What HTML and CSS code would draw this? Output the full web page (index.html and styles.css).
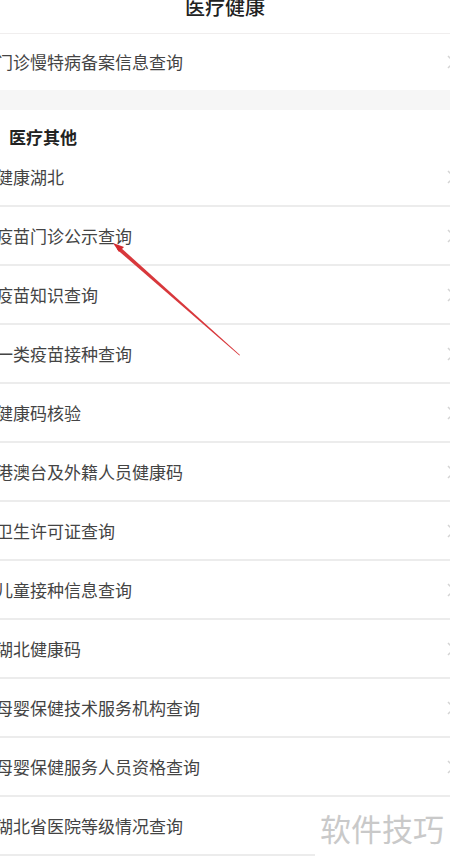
FILE: index.html
```html
<!DOCTYPE html>
<html lang="zh-CN">

<head>
    <meta charset="UTF-8">
    <meta name="viewport" content="width=device-width, initial-scale=1.0">
    <title>医疗健康</title>
    <link rel="stylesheet" href="styles.css">
</head>

<body>
    <header class="top-bar">
        <h1>医疗健康</h1>
    </header>

    <div class="page">
        <ul class="list">
            <li class="item first">
                <span>门诊慢特病备案信息查询</span>
                <svg class="chevron" viewBox="0 0 8 14"><path d="M1 1l6 6-6 6" /></svg>
            </li>
        </ul>

        <div class="gap"></div>

        <h2 class="section-title">医疗其他</h2>
        <ul class="list">
            <li class="item"><span>健康湖北</span><svg class="chevron" viewBox="0 0 8 14"><path d="M1 1l6 6-6 6" /></svg></li>
            <li class="item"><span>疫苗门诊公示查询</span><svg class="chevron" viewBox="0 0 8 14"><path d="M1 1l6 6-6 6" /></svg></li>
            <li class="item"><span>疫苗知识查询</span><svg class="chevron" viewBox="0 0 8 14"><path d="M1 1l6 6-6 6" /></svg></li>
            <li class="item"><span>一类疫苗接种查询</span><svg class="chevron" viewBox="0 0 8 14"><path d="M1 1l6 6-6 6" /></svg></li>
            <li class="item"><span>健康码核验</span><svg class="chevron" viewBox="0 0 8 14"><path d="M1 1l6 6-6 6" /></svg></li>
            <li class="item"><span>港澳台及外籍人员健康码</span><svg class="chevron" viewBox="0 0 8 14"><path d="M1 1l6 6-6 6" /></svg></li>
            <li class="item"><span>卫生许可证查询</span><svg class="chevron" viewBox="0 0 8 14"><path d="M1 1l6 6-6 6" /></svg></li>
            <li class="item"><span>儿童接种信息查询</span><svg class="chevron" viewBox="0 0 8 14"><path d="M1 1l6 6-6 6" /></svg></li>
            <li class="item"><span>湖北健康码</span><svg class="chevron" viewBox="0 0 8 14"><path d="M1 1l6 6-6 6" /></svg></li>
            <li class="item"><span>母婴保健技术服务机构查询</span><svg class="chevron" viewBox="0 0 8 14"><path d="M1 1l6 6-6 6" /></svg></li>
            <li class="item"><span>母婴保健服务人员资格查询</span><svg class="chevron" viewBox="0 0 8 14"><path d="M1 1l6 6-6 6" /></svg></li>
            <li class="item"><span>湖北省医院等级情况查询</span><svg class="chevron" viewBox="0 0 8 14"><path d="M1 1l6 6-6 6" /></svg></li>
        </ul>
    </div>

    <!-- annotation arrow drawn over the list -->
    <svg class="annotation" width="450" height="861" viewBox="0 0 450 861">
        <polygon points="240,355 239.4,355.6 117,249.5 119.5,246.5" fill="#d8383c" />
        <polygon points="113,243 124,247 119,252" fill="#d42a2f" />
    </svg>

    <div class="watermark">软件技巧</div>
</body>

</html>
```

FILE: styles.css
```css
/* Reset styles */
* {
    margin: 0;
    padding: 0;
    box-sizing: border-box;
}

body {
    width: 450px;
    height: 861px;
    overflow: hidden;
    position: relative;
    background-color: #fff;
    font-family: "Noto Sans CJK SC", "Noto Sans", sans-serif;
    color: #444;
}

/* Top bar */
.top-bar {
    display: flex;
    justify-content: center;
    align-items: flex-start;
    height: 34px;
    border-bottom: 1px solid #f0eeee;
}

.top-bar h1 {
    font-size: 20px;
    font-weight: 500;
    line-height: 20px;
    margin-top: -3px;
    color: #222;
}

.page {
    margin-left: -4px;
}

.list {
    list-style: none;
}

.item {
    display: flex;
    align-items: center;
    justify-content: space-between;
    height: 59px;
    border-bottom: 2px solid #ececec;
    font-size: 17px;
    line-height: 24px;
}

.item.first {
    height: 56px;
    border-bottom: none;
}

.chevron {
    width: 8px;
    height: 14px;
    margin-right: -5px;
    fill: none;
    stroke: #d4d4d4;
    stroke-width: 1.5;
}

.gap {
    height: 20px;
    background-color: #f6f6f6;
}

.section-title {
    height: 38px;
    padding-top: 15px;
    padding-left: 13px;
    font-size: 17px;
    line-height: 24px;
    font-weight: 700;
    color: #222;
}

/* Overlays */
.annotation {
    position: absolute;
    top: 0;
    left: 0;
    pointer-events: none;
}

.watermark {
    position: absolute;
    left: 315px;
    top: 799px;
    width: 135px;
    height: 57px;
    background-color: #fff;
    padding-left: 5px;
    font-size: 31px;
    line-height: 57px;
    color: #c9c9c9;
}
```
